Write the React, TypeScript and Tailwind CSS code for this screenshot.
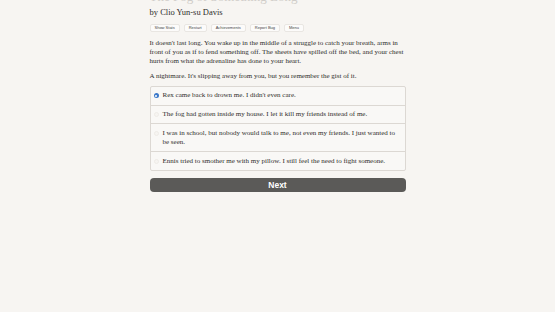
const options = [
  "Rex came back to drown me. I didn't even care.",
  "The fog had gotten inside my house. I let it kill my friends instead of me.",
  "I was in school, but nobody would talk to me, not even my friends. I just wanted to be seen.",
  "Ennis tried to smother me with my pillow. I still feel the need to fight someone.",
];

const buttons = ["Show Stats", "Restart", "Achievements", "Report Bug", "Menu"];

export default function App() {
  return (
    <div className="w-[555px] h-[312px] overflow-hidden bg-[#f7f5f2] text-[#2e2d2b] font-['Liberation_Serif',serif]">
      <div className="w-[256px] mx-auto">
        <h1 className="text-[13px] leading-[13px] -mt-[10px] text-[#d0cdc9]">The Fog of Something Long</h1>
        <div className="mt-[4px] text-[8.5px] leading-[10px] text-[#2e2d2b]">by Clio Yun-su Davis</div>
        <div className="flex gap-[4px] mt-[7px] font-['Liberation_Sans',sans-serif]">
          {buttons.map((b) => (
            <span
              key={b}
              className="px-[4px] h-[8px] flex items-center text-[4px] leading-none bg-[#fcfbfa] border border-[#e9e6e2] rounded-[2px] text-[#444]"
            >
              {b}
            </span>
          ))}
        </div>
        <p className="mt-[7px] text-[7px] leading-[9.2px]">
          It doesn't last long. You wake up in the middle of a struggle to catch your breath, arms in
          front of you as if to fend something off. The sheets have spilled off the bed, and your chest
          hurts from what the adrenaline has done to your heart.
        </p>
        <p className="mt-[5px] text-[7px] leading-[9.2px]">
          A nightmare. It's slipping away from you, but you remember the gist of it.
        </p>
        <div className="mt-[5px] border border-[#dcd8d3] rounded-[2px] bg-[#f9f8f6]">
          {options.map((o, i) => (
            <div
              key={o}
              className={`flex items-start gap-[3px] px-[3px] py-[4.4px] text-[7px] leading-[9px] ${i > 0 ? "border-t border-[#dcd8d3]" : ""}`}
            >
              <span
                className={`mt-[2px] shrink-0 w-[5px] h-[5px] rounded-full flex items-center justify-center ${i === 0 ? "bg-[#3a78c9]" : "bg-[#f6f4f1] border border-[#eeebe7]"}`}
              >
                {i === 0 && <span className="w-[2px] h-[2px] rounded-full bg-white" />}
              </span>
              <span className="pl-[1px]">{o}</span>
            </div>
          ))}
        </div>
        <div className="mt-[7px] h-[14px] rounded-[4px] bg-[#5b5a58] flex items-center justify-center text-white text-[8.5px] font-bold font-['Liberation_Sans',sans-serif]">
          Next
        </div>
      </div>
    </div>
  );
}
